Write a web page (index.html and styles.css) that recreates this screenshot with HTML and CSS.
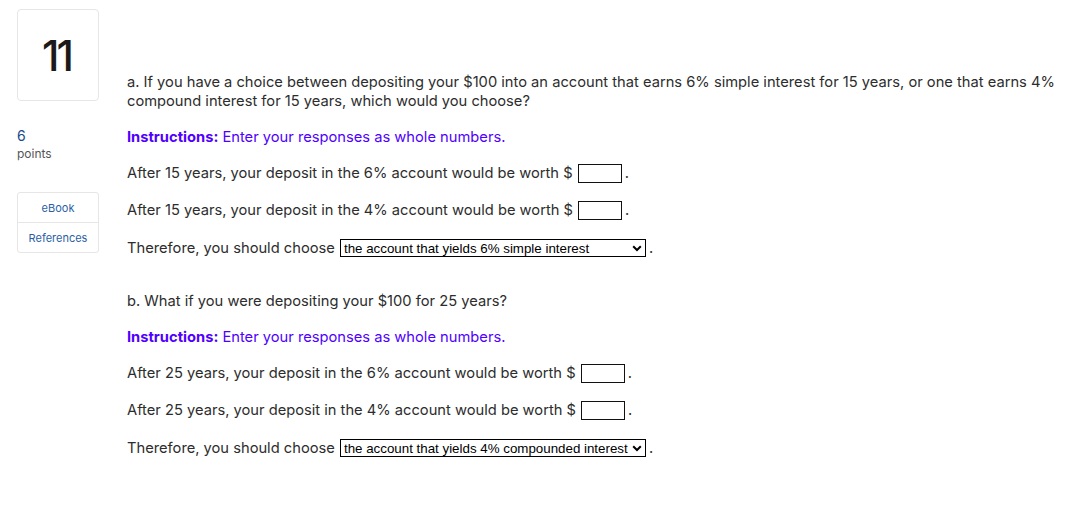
FILE: index.html
```html
<!DOCTYPE html>
<html>
<head>
<meta charset="utf-8">
<link rel="stylesheet" href="styles.css">
</head>
<body>
<div class="page">
  <aside class="side">
    <div class="qnum">11</div>
    <div class="pts">
      <div class="pts-num">6</div>
      <div class="pts-label">points</div>
    </div>
    <div class="links">
      <div class="link">eBook</div>
      <div class="link">References</div>
    </div>
  </aside>
  <main class="main">
    <section class="part">
      <p class="q">a. If you have a choice between depositing your $100 into an account that earns 6% simple interest for 15 years, or one that earns 4% compound interest for 15 years, which would you choose?</p>
      <p class="instr"><b>Instructions:</b> Enter your responses as whole numbers.</p>
      <p class="row">After 15 years, your deposit in the 6% account would be worth $ <span class="inp"></span><span class="dot">.</span></p>
      <p class="row">After 15 years, your deposit in the 4% account would be worth $ <span class="inp"></span><span class="dot">.</span></p>
      <p class="row row-sel">Therefore, you should choose <span class="sel"><select><option>the account that yields 6% simple interest</option><option>the account that yields 4% compounded interest</option></select><svg class="chev" width="10" height="7" viewBox="0 0 10 7"><path d="M1.2 1.3 L5 5 L8.8 1.3" fill="none" stroke="#000" stroke-width="2"/></svg></span><span class="dot">.</span></p>
    </section>
    <section class="part">
      <p class="q">b. What if you were depositing your $100 for 25 years?</p>
      <p class="instr"><b>Instructions:</b> Enter your responses as whole numbers.</p>
      <p class="row">After 25 years, your deposit in the 6% account would be worth $ <span class="inp"></span><span class="dot">.</span></p>
      <p class="row">After 25 years, your deposit in the 4% account would be worth $ <span class="inp"></span><span class="dot">.</span></p>
      <p class="row row-sel">Therefore, you should choose <span class="sel"><select><option>the account that yields 4% compounded interest</option><option>the account that yields 6% simple interest</option></select><svg class="chev" width="10" height="7" viewBox="0 0 10 7"><path d="M1.2 1.3 L5 5 L8.8 1.3" fill="none" stroke="#000" stroke-width="2"/></svg></span><span class="dot">.</span></p>
    </section>
  </main>
</div>
</body>
</html>
```
FILE: styles.css
```css
html, body {
  margin: 0;
  padding: 0;
  background: #fff;
}
body {
  font-family: "Inter", "Open Sans", sans-serif;
  color: #2d2d2d;
}
.page {
  display: flex;
  padding: 9px 0 0 17px;
}
.side {
  width: 82px;
  flex: none;
  display: flex;
  flex-direction: column;
}
.qnum {
  box-sizing: border-box;
  height: 92px;
  border: 1px solid #e6e6e6;
  border-radius: 4px;
  display: flex;
  align-items: center;
  justify-content: center;
  font-size: 42px;
  font-weight: 500;
  color: #1a1a1a;
  letter-spacing: -3px;
  padding-right: 3px;
}
.pts {
  margin-top: 26px;
}
.pts-num {
  font-size: 14px;
  line-height: 18px;
  color: #174a8b;
}
.pts-label {
  font-size: 12px;
  line-height: 16px;
  color: #555;
  margin-top: 1px;
}
.links {
  margin-top: 30px;
  border: 1px solid #e6e6e6;
  border-radius: 3px;
}
.link {
  height: 29px;
  display: flex;
  align-items: center;
  justify-content: center;
  font-size: 11px;
  color: #2b5fa5;
}
.link + .link {
  border-top: 1px solid #e6e6e6;
}
.main {
  margin-left: 28px;
  padding-top: 64px;
  width: 935px;
}
.part + .part {
  margin-top: 34px;
}
p {
  margin: 0;
  font-size: 14.7px;
  line-height: 19px;
}
.q {
  margin-bottom: 17px;
}
.instr {
  color: #5000ff;
  margin-bottom: 16px;
}
.instr b {
  font-weight: 700;
}
.row {
  display: flex;
  align-items: center;
  height: 20px;
  white-space: pre;
}
.row + .row {
  margin-top: 17px;
}
.row + .row-sel {
  margin-top: 18px;
}
.inp {
  display: inline-block;
  box-sizing: border-box;
  width: 44px;
  height: 19px;
  border: 1px solid #111;
  margin-left: 1px;
}
.dot {
  margin-left: 3px;
}
.sel {
  position: relative;
  display: inline-block;
  margin-left: 1px;
}
.sel select {
  appearance: none;
  -webkit-appearance: none;
  box-sizing: border-box;
  height: 18px;
  border: 1px solid #000;
  border-radius: 0;
  background: #fff;
  font-family: "Liberation Sans", Arial, sans-serif;
  font-size: 13.33px;
  color: #000;
  padding: 0 17px 0 3px;
  margin: 0;
  display: block;
}
.chev {
  position: absolute;
  right: 4px;
  top: 6px;
  pointer-events: none;
}
```
